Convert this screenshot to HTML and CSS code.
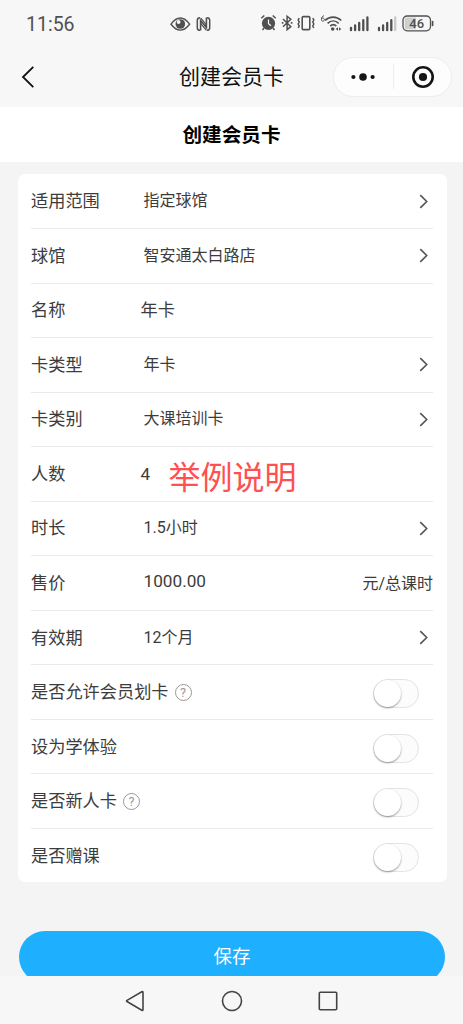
FILE: index.html
```html
<!DOCTYPE html>
<html lang="zh-CN">
<head>
<meta charset="UTF-8">
<meta name="viewport" content="width=device-width, initial-scale=1">
<title>创建会员卡</title>
<link rel="stylesheet" href="styles.css">
</head>
<body>
<div class="screen">
  <header class="status-bar">
    <span class="clock">11:56</span>
    <svg class="status-left" width="42" height="18" viewBox="0 0 42 18" fill="none" stroke="#505050">
      <path d="M1 9.200C4.500 4.400 7.300 3 10.300 3s5.800 1.400 9.300 6.200c-3.500 4.500-6.300 5.900-9.300 5.900S4.500 13.700 1 9.200z" stroke-width="1.400"/>
      <circle cx="10.300" cy="9" r="4.800" fill="#505050" stroke="none"/>
      <circle cx="8.600" cy="7" r="1.900" fill="#f7f7f7" stroke="none"/>
      <path d="M30 2.700c-2.200 0-2.700.6-2.700 2.600v7.400c0 2 .5 2.600 2.700 2.600M37 2.700c2.200 0 2.700.6 2.700 2.600v7.400c0 2-.5 2.600-2.700 2.600" stroke-width="1.500"/>
      <path d="M30.600 15.500V5.500l5.800 7V2.500" stroke-width="1.600"/>
      <path d="M30.600 2.800l5.800 7M30.600 8.300l5.800 7" stroke-width="1.200"/>
    </svg>
    <svg class="status-right" width="176" height="20" viewBox="0 0 176 20" fill="none" stroke="#505050">
      <circle cx="8.500" cy="10.400" r="6.600" fill="#505050" stroke="none"/>
      <path d="M1.300 5.200l3-2.700M15.700 5.200l-3-2.700M4 15l-1.500 2M13 15l1.500 2" stroke-width="1.500"/>
      <path d="M8.500 6.500v4.200l2.500 2" stroke="#f7f7f7" stroke-width="1.200"/>
      <path d="M23 6l7.800 7.600-3.700 3V3.200l3.700 3-7.800 7.600" stroke-width="1.500"/>
      <path d="M21.800 9.900h1.600M30.800 9.900h1.600" stroke-width="1.700"/>
      <rect x="42.200" y="3.600" width="7.600" height="13" rx="1.200" stroke-width="1.600"/>
      <path d="M39.200 5l-1 2 1 2-1 2 1 2-1 2M52.800 5l1 2-1 2 1 2-1 2 1 2" stroke-width="1.500"/>
      <path d="M64 2.800c-3 .2-3.300 5.400-1.300 5.400 2.300 0 2.200-3.200 0-3.200-.8 0-1.300.5-1.500 1" stroke-width="1"/>
      <path d="M65 7.500c4.700-4.600 11.500-4.600 16.200 0M67.600 10.300c3.300-3.100 7.800-3.100 11.100 0M70.200 13c1.800-1.600 4.300-1.600 6.100 0" stroke-width="1.700"/>
      <circle cx="72.700" cy="16" r="1.800" fill="#505050" stroke="none"/>
      <path d="M78 14.200v3.600l-2.300-1.800zM79 14.200v3.600l2.300-1.800z" fill="#505050" stroke="none"/>
      <path d="M91 14.800v2.400M95.100 12.500v4.700M99.200 10v7.200M103.300 7.200v10M107.400 4.500v12.700M119 14.800v2.400M123.100 12.500v4.700M127.200 10v7.200M131.300 7.200v10" stroke-width="2.300" stroke-linecap="round"/>
      <path d="M135.200 4.500v12.700" stroke="#c9c9c9" stroke-width="2.300" stroke-linecap="round"/>
      <rect x="143" y="3" width="27.500" height="14.800" rx="4.200" fill="#f7f7f7" stroke-width="1.300"/>
      <path d="M147 4.500h9v11.800h-9a2.300 2.300 0 0 1-2.300-2.300V6.800a2.300 2.300 0 0 1 2.300-2.300z" fill="#cfcfcf" stroke="none"/>
      <path d="M172.600 8.700v3.600" stroke-width="1.700" stroke-linecap="round"/>
      <text class="battery-text" x="156.700" y="15" text-anchor="middle">46</text>
    </svg>
  </header>

  <nav class="title-bar">
    <svg class="back" width="14" height="24" viewBox="0 0 14 24" fill="none" stroke="#111" stroke-width="1.800"><path d="M12.300 1.800L2 12l10.300 10.200"/></svg>
    <h1 class="nav-title">创建会员卡</h1>
    <div class="capsule">
      <svg width="24" height="10" viewBox="0 0 24 10" fill="#151515"><circle cx="2.400" cy="5" r="2.100"/><circle cx="12" cy="5" r="3.800"/><circle cx="21.600" cy="5" r="2.100"/></svg>
      <span class="capsule-line"></span>
      <svg width="24" height="24" viewBox="0 0 24 24"><circle cx="12" cy="12" r="9.700" fill="none" stroke="#151515" stroke-width="2.600"/><circle cx="12" cy="12" r="4.100" fill="#151515"/></svg>
    </div>
  </nav>

  <h2 class="page-title">创建会员卡</h2>

  <main class="content">
    <section class="card">
      <div class="row"><span class="label">适用范围</span><span class="value">指定球馆</span><svg class="arrow" viewBox="0 0 8 14"><path d="M1 1l6 6-6 6"/></svg></div>
      <div class="row"><span class="label">球馆</span><span class="value">智安通太白路店</span><svg class="arrow" viewBox="0 0 8 14"><path d="M1 1l6 6-6 6"/></svg></div>
      <div class="row"><span class="label">名称</span><span class="value input">年卡</span></div>
      <div class="row"><span class="label">卡类型</span><span class="value">年卡</span><svg class="arrow" viewBox="0 0 8 14"><path d="M1 1l6 6-6 6"/></svg></div>
      <div class="row"><span class="label">卡类别</span><span class="value">大课培训卡</span><svg class="arrow" viewBox="0 0 8 14"><path d="M1 1l6 6-6 6"/></svg></div>
      <div class="row"><span class="label">人数</span><span class="value input count">4</span><span class="note">举例说明</span></div>
      <div class="row"><span class="label">时长</span><span class="value">1.5小时</span><svg class="arrow" viewBox="0 0 8 14"><path d="M1 1l6 6-6 6"/></svg></div>
      <div class="row"><span class="label">售价</span><span class="value price">1000.00</span><span class="unit">元/总课时</span></div>
      <div class="row"><span class="label">有效期</span><span class="value">12个月</span><svg class="arrow" viewBox="0 0 8 14"><path d="M1 1l6 6-6 6"/></svg></div>
      <div class="row"><span class="label wide">是否允许会员划卡</span><span class="help">?</span><span class="switch"></span></div>
      <div class="row"><span class="label wide">设为学体验</span><span class="switch"></span></div>
      <div class="row"><span class="label wide">是否新人卡</span><span class="help">?</span><span class="switch"></span></div>
      <div class="row"><span class="label wide">是否赠课</span><span class="switch"></span></div>
    </section>
    <button class="save">保存</button>
  </main>

  <footer class="system-nav">
    <svg width="20" height="22" viewBox="0 0 20 22"><path d="M2 11.500Q1 11 2 10.400L16.800 1.700Q18 1.200 18 2.500v17q0 1.300-1.200.7z"/></svg>
    <svg width="22" height="22" viewBox="0 0 22 22"><circle cx="11" cy="11" r="9.500"/></svg>
    <svg width="20" height="20" viewBox="0 0 20 20"><rect x="1.300" y="1.300" width="17.400" height="17.400" rx="1"/></svg>
  </footer>
</div>
</body>
</html>
```
FILE: styles.css
```css
* { box-sizing: border-box; }

body {
  margin: 0;
  background: #f7f7f7;
  color: #3c3c3c;
  font-family: Roboto, "Noto Sans CJK SC", sans-serif;
}

h1, h2 { margin: 0; }

svg { display: block; flex: none; }

.screen {
  display: flex;
  flex-direction: column;
  width: 463px;
  height: 1024px;
  overflow: hidden;
}

.status-bar {
  display: flex;
  align-items: center;
  height: 46px;
  flex: none;
  padding: 0 27px 0 26px;
}

.clock { width: 145px; font-size: 19.5px; color: #505050; padding-top: 2px; }
.status-left { margin-top: 1px; }
.status-right { margin-left: 48px; }
.battery-text { font-size: 13px; font-weight: 500; fill: #505050; stroke: none; }

.title-bar {
  display: grid;
  grid-template-columns: 130px 1fr 130px;
  align-items: center;
  height: 61px;
  flex: none;
  padding: 0 12px 0 21px;
}

.nav-title {
  font-size: 21px;
  font-weight: 400;
  color: #111;
  line-height: 30px;
  text-align: center;
  padding: 1px 9px 0 0;
}

.capsule {
  display: flex;
  align-items: center;
  justify-content: space-between;
  width: 119px;
  height: 40px;
  margin-left: 12px;
  padding: 0 16px 0 17px;
  background: #fdfdfd;
  border: 1px solid #ededed;
  border-radius: 20px;
}

.capsule-line { width: 1px; height: 25px; background: #eee; }

.page-title {
  height: 55px;
  flex: none;
  background: #fff;
  color: #000;
  font-size: 19.6px;
  font-weight: 700;
  line-height: 57px;
  text-align: center;
}

.content {
  height: 814px;
  flex: none;
  padding: 11.5px 16px 0 18px;
  background: #f4f4f4;
  overflow: hidden;
}

.card {
  background: #fff;
  border-radius: 7px;
  padding: 0 14px 0 13px;
}

.row {
  display: flex;
  align-items: center;
  height: 54.54px;
  border-top: 1px solid #ebebeb;
}

.row:first-child { border-top-color: transparent; }

.label { width: 112.5px; font-size: 17.2px; line-height: 24px; white-space: nowrap; }
.label.wide { width: auto; }
.value { font-size: 16px; line-height: 24px; }
.value.input { font-size: 17.2px; margin-left: -3px; }
.value.count { width: 28px; }
.value.price { font-size: 17.2px; margin-top: -3px; }

.arrow {
  width: 9px;
  height: 15px;
  margin: 0 5px 0 auto;
  fill: none;
  stroke: #555;
  stroke-width: 1.5;
}

.note { color: #ff5050; font-size: 32px; line-height: 40px; margin-top: 8px; }
.unit { margin: 2px 0 0 auto; font-size: 16px; line-height: 24px; }

.help {
  width: 17px;
  height: 17px;
  margin-left: 6px;
  border: 1px solid #999;
  border-radius: 50%;
  color: #999;
  font-size: 12.5px;
  line-height: 16px;
  text-align: center;
}

.switch {
  display: flex;
  width: 46px;
  height: 29px;
  margin: 3px 14px 0 auto;
  background: #fcfcfc;
  border: 1px solid #e3e3e3;
  border-radius: 15px;
}

.switch::before {
  content: "";
  width: 27px;
  height: 27px;
  border-radius: 50%;
  background: #fff;
  box-shadow: 0 1px 2px rgba(0, 0, 0, .4);
}

.save {
  display: block;
  width: 426px;
  height: 52px;
  margin: 48.5px 0 0 1px;
  padding: 0;
  border: 0;
  border-radius: 26px;
  background: #1eafff;
  color: #fff;
  font: 18.5px/50px Roboto, "Noto Sans CJK SC", sans-serif;
}

.system-nav {
  display: flex;
  align-items: center;
  justify-content: space-between;
  height: 48px;
  flex: none;
  padding: 2px 125px 0 125px;
}

.system-nav svg { fill: none; stroke: #444; stroke-width: 1.6; }
```
